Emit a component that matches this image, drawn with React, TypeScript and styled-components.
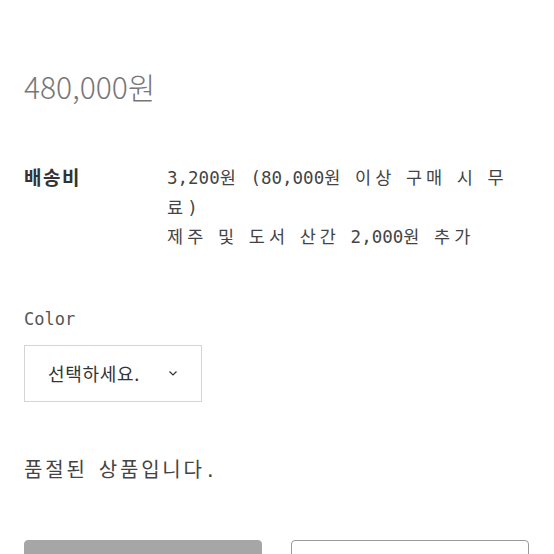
import styled, { createGlobalStyle } from 'styled-components';

const GlobalStyle = createGlobalStyle`
    html, body {
        margin: 0;
        padding: 0;
        background: #fff;
    }
    body {
        font-family: 'Noto Sans CJK KR', 'Noto Sans', sans-serif;
        color: #333;
        overflow: hidden;
    }
`;

const MONO = `'DejaVu Sans Mono', 'Noto Sans CJK KR', monospace`;

const Page = styled.div`
    width: 554px;
    box-sizing: border-box;
    padding: 66px 24px 0 24px;
    display: flex;
    flex-direction: column;
`;

const Price = styled.div`
    font-size: 30px;
    font-weight: 300;
    line-height: 40px;
    color: #777;
`;

const InfoRow = styled.div`
    display: grid;
    grid-template-columns: 143px 1fr;
    margin-top: 57px;
`;

const InfoLabel = styled.div`
    font-size: 19px;
    font-weight: 700;
    line-height: 28px;
    color: #333;
    letter-spacing: 1.5px;
`;

const InfoValue = styled.div`
    font-family: ${MONO};
    font-size: 17.5px;
    line-height: 27.5px;
    color: #444;
    word-break: break-all;
    padding-right: 8px;
`;

// 한글만 넓게 (고정폭 글꼴의 전각 폭 흉내)
const Hangul = styled.span<{ $size: number; $spacing: number }>`
    font-family: 'Noto Sans CJK KR', sans-serif;
    font-size: ${({ $size }) => $size}px;
    letter-spacing: ${({ $spacing }) => $spacing}px;
`;

const OptionLabel = styled.div`
    margin-top: 55px;
    font-family: ${MONO};
    font-size: 17px;
    line-height: 24px;
    color: #555;
`;

const SelectBox = styled.div`
    margin-top: 14px;
    width: 178px;
    height: 57px;
    flex-shrink: 0;
    box-sizing: border-box;
    border: 1px solid #d4d4d4;
    display: flex;
    align-items: center;
    justify-content: space-between;
    padding: 0 23px 0 23px;
    font-size: 18px;
    letter-spacing: 0.7px;
    color: #333;
`;

const SoldOut = styled.div`
    margin-top: 52px;
    font-family: ${MONO};
    font-size: 18.5px;
    line-height: 30px;
    color: #444;
`;

const ButtonRow = styled.div`
    margin-top: 54px;
    display: grid;
    grid-template-columns: 238px 238px;
    justify-content: space-between;
    padding-right: 1px;
`;

const Button = styled.div<{ $filled?: boolean }>`
    height: 40px;
    box-sizing: border-box;
    border-radius: 4px;
    background: ${({ $filled }) => ($filled ? '#a6a6a6' : '#fff')};
    border: 1px solid ${({ $filled }) => ($filled ? '#a6a6a6' : '#9a9a9a')};
`;

const monoText = (text: string, size: number, spacing: number) =>
    text.split(/([\uAC00-\uD7A3]+)/).map((part, i) =>
        /[\uAC00-\uD7A3]/.test(part) ? (
            <Hangul key={i} $size={size} $spacing={spacing}>
                {part}
            </Hangul>
        ) : (
            part
        )
    );

const App = () => {
    return (
        <>
            <GlobalStyle />
            <Page>
                {/* 가격 */}
                <Price>480,000원</Price>

                {/* 배송비 */}
                <InfoRow>
                    <InfoLabel>배송비</InfoLabel>
                    <InfoValue>
                        {monoText('3,200원 (80,000원 이상 구매 시 무료)', 17.5, 4.1)}
                        <br />
                        {monoText('제주 및 도서 산간 2,000원 추가', 17.5, 4.1)}
                    </InfoValue>
                </InfoRow>

                {/* 옵션 */}
                <OptionLabel>Color</OptionLabel>
                <SelectBox>
                    <span>선택하세요.</span>
                    <svg width="10" height="7" viewBox="0 0 10 7" fill="none">
                        <path d="M1.5 1.5 L5 5 L8.5 1.5" stroke="#333" strokeWidth="1.2" />
                    </svg>
                </SelectBox>

                <SoldOut>{monoText('품절된 상품입니다.', 20, 2.8)}</SoldOut>

                <ButtonRow>
                    <Button $filled />
                    <Button />
                </ButtonRow>
            </Page>
        </>
    );
};

export default App;
